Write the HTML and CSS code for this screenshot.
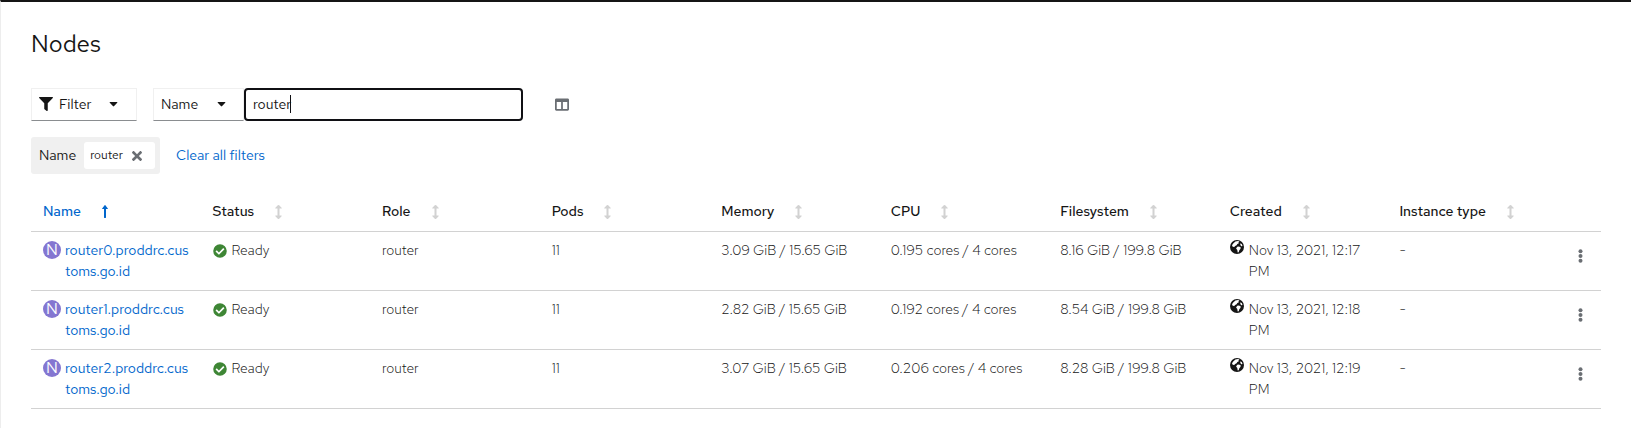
FILE: index.html
```html
<!DOCTYPE html>
<html lang="en">
<head>
<meta charset="utf-8">
<title>Nodes</title>
<link rel="stylesheet" href="styles.css">
</head>
<body>
<svg class="sprite" aria-hidden="true">
  <symbol id="i-filter" viewBox="0 0 512 512"><path d="M488 0H24C3 0-8 26 7 41l185 185v206c0 8 4 15 10 20l80 56c16 11 38 0 38-20V226L505 41c15-15 4-41-17-41z"/></symbol>
  <symbol id="i-caret" viewBox="0 0 320 192"><path d="M31 0h258c17 0 26 21 14 33L174 162c-8 8-20 8-28 0L17 33C5 21 14 0 31 0z"/></symbol>
  <symbol id="i-times" viewBox="0 0 352 352"><path d="M242 176 342 76c13-12 13-32 0-44l-22-22c-12-13-32-13-44 0L176 110 76 10C64-3 44-3 32 10L10 32c-13 12-13 32 0 44l100 100L10 276c-13 12-13 32 0 44l22 22c12 13 32 13 44 0l100-100 100 100c12 13 32 13 44 0l22-22c13-12 13-32 0-44z"/></symbol>
  <symbol id="i-columns" viewBox="0 0 512 448"><path d="M464 0H48C22 0 0 22 0 48v352c0 26 22 48 48 48h416c26 0 48-22 48-48V48c0-26-22-48-48-48zM224 384H64V128h160zm224 0H288V128h160z"/></symbol>
  <symbol id="i-up" viewBox="0 0 6 13"><path d="M2 4v8.600q0 .4.4.4h1.200q.4 0 .4-.4V4h1.500q.8 0 .3-.6L3.400.3Q3-.1 2.600.3L.2 3.400Q-.3 4 .5 4z"/></symbol>
  <symbol id="i-sort" viewBox="0 0 7 14"><path d="M4.500 10.500v-7h1.700q1 0 .4-.8L4.200.3q-.7-.6-1.400 0L.4 2.700q-.6.8.4.8h1.700v7H.8q-1 0-.4.800l2.400 2.400q.7.6 1.400 0l2.400-2.400q.6-.8-.4-.8z"/></symbol>
  <symbol id="i-check" viewBox="0 0 512 512"><path d="M504 256a248 248 0 1 1-496 0 248 248 0 0 1 496 0zM227 387l184-184c6-6 6-16 0-22l-22-23c-7-6-17-6-23 0L216 308l-70-70c-6-6-16-6-23 0l-22 23c-6 6-6 16 0 22l104 104c6 7 16 7 22 0z"/></symbol>
  <symbol id="i-globe" viewBox="0 0 14 14"><circle cx="7" cy="7" r="7"/><path fill="#fff" d="M5.400 1.600 8 .9l1.400.5-1 1 .5.800-1.600.9-.7 1.200-1.500.6-.8 1.100-1.600-.2L2 5.300l1.200-1.900zM7.200 6.800l1.800-.3 1.800 1-.4 1.500-1.100 1.300-.6 1.900-1 .3-.4-2.600-1.200-1.400zM10.400 3.200l1.500 1 .6 1.700-1.200.3-1-1.200z"/></symbol>
  <symbol id="i-kebab" viewBox="0 0 5 14"><circle cx="2.500" cy="2.300" r="2"/><circle cx="2.500" cy="7" r="2"/><circle cx="2.500" cy="11.700" r="2"/></symbol>
</svg>
<main class="page">
  <h1 class="title">Nodes</h1>

  <div class="toolbar">
    <button class="toggle toggle-filter" type="button"><svg class="ic-filter"><use href="#i-filter"/></svg><span>Filter</span><svg class="ic-caret"><use href="#i-caret"/></svg></button>
    <div class="search">
      <button class="toggle toggle-name" type="button"><span>Name</span><svg class="ic-caret"><use href="#i-caret"/></svg></button>
      <div class="field"><input class="input" type="text" value="router" aria-label="Name filter"><span class="cursor"></span></div>
    </div>
    <button class="icon-button" type="button" aria-label="Manage columns"><svg class="ic-columns"><use href="#i-columns"/></svg></button>
  </div>

  <div class="chips">
    <div class="chip-group"><span>Name</span><span class="chip">router<button class="icon-button" type="button" aria-label="Remove router"><svg class="ic-times"><use href="#i-times"/></svg></button></span></div>
    <button class="link-button" type="button">Clear all filters</button>
  </div>

  <table class="nodes">
    <thead>
      <tr>
        <th class="sorted"><button type="button">Name<svg class="ic-up"><use href="#i-up"/></svg></button></th>
        <th><button type="button">Status<svg class="ic-sort"><use href="#i-sort"/></svg></button></th>
        <th><button type="button">Role<svg class="ic-sort"><use href="#i-sort"/></svg></button></th>
        <th><button type="button">Pods<svg class="ic-sort"><use href="#i-sort"/></svg></button></th>
        <th><button type="button">Memory<svg class="ic-sort"><use href="#i-sort"/></svg></button></th>
        <th><button type="button">CPU<svg class="ic-sort"><use href="#i-sort"/></svg></button></th>
        <th><button type="button">Filesystem<svg class="ic-sort"><use href="#i-sort"/></svg></button></th>
        <th><button type="button">Created<svg class="ic-sort"><use href="#i-sort"/></svg></button></th>
        <th><button type="button">Instance type<svg class="ic-sort"><use href="#i-sort"/></svg></button></th>
        <td class="actions"></td>
      </tr>
    </thead>
    <tbody>
      <tr>
        <td><div class="node"><span class="badge">N</span><a href="#">router0.proddrc.cus<wbr>toms.go.id</a></div></td>
        <td><div class="status"><svg class="ic-check"><use href="#i-check"/></svg>Ready</div></td>
        <td>router</td><td>11</td><td>3.09 GiB / 15.65 GiB</td><td>0.195 cores / 4 cores</td><td>8.16 GiB / 199.8 GiB</td>
        <td><div class="created"><svg class="ic-globe"><use href="#i-globe"/></svg><span>Nov 13, 2021, 12:17 PM</span></div></td>
        <td class="dash">-</td>
        <td class="actions"><button class="icon-button" type="button" aria-label="Actions"><svg class="ic-kebab"><use href="#i-kebab"/></svg></button></td>
      </tr>
      <tr>
        <td><div class="node"><span class="badge">N</span><a href="#">router1.proddrc.cus<wbr>toms.go.id</a></div></td>
        <td><div class="status"><svg class="ic-check"><use href="#i-check"/></svg>Ready</div></td>
        <td>router</td><td>11</td><td>2.82 GiB / 15.65 GiB</td><td>0.192 cores / 4 cores</td><td>8.54 GiB / 199.8 GiB</td>
        <td><div class="created"><svg class="ic-globe"><use href="#i-globe"/></svg><span>Nov 13, 2021, 12:18 PM</span></div></td>
        <td class="dash">-</td>
        <td class="actions"><button class="icon-button" type="button" aria-label="Actions"><svg class="ic-kebab"><use href="#i-kebab"/></svg></button></td>
      </tr>
      <tr>
        <td><div class="node"><span class="badge">N</span><a href="#">router2.proddrc.cus<wbr>toms.go.id</a></div></td>
        <td><div class="status"><svg class="ic-check"><use href="#i-check"/></svg>Ready</div></td>
        <td>router</td><td>11</td><td>3.07 GiB / 15.65 GiB</td><td>0.206 cores / 4 cores</td><td>8.28 GiB / 199.8 GiB</td>
        <td><div class="created"><svg class="ic-globe"><use href="#i-globe"/></svg><span>Nov 13, 2021, 12:19 PM</span></div></td>
        <td class="dash">-</td>
        <td class="actions"><button class="icon-button" type="button" aria-label="Actions"><svg class="ic-kebab"><use href="#i-kebab"/></svg></button></td>
      </tr>
    </tbody>
  </table>
</main>
</body>
</html>
```

FILE: styles.css
```css
* { box-sizing: border-box; }
body {
  margin: 0;
  background: #fff;
  color: #151515;
  font: 400 14px/21px "Red Hat Text", Lato, sans-serif;
}
button, input { font: inherit; color: inherit; }
button { margin: 0; padding: 0; border: 0; background: none; cursor: pointer; }
svg { display: block; flex: none; fill: currentColor; }
.sprite { position: absolute; width: 0; height: 0; }

.page {
  min-height: 100vh;
  padding: 26px 30px 16px;
  border-top: 2px solid #151515;
  border-left: 1px solid #ededed;
}
.title {
  margin: 0 0 28px;
  font-size: 24px;
  line-height: 32px;
  font-weight: 400;
}

.toolbar { display: flex; align-items: center; gap: 16px; margin-bottom: 16px; }
.toggle {
  display: flex;
  align-items: center;
  height: 33px;
  padding: 0 8px 1px;
  border: 1px solid #f0f0f0;
  border-bottom-color: #8a8d90;
}
.toggle .ic-caret { margin-left: auto; }
.toggle-filter { width: 106px; gap: 6px; padding-left: 7px; padding-right: 18px; }
.toggle-name { width: 91px; padding-left: 7px; padding-right: 17px; }
.search { display: flex; }
.field { position: relative; width: 279px; }
.input {
  display: block;
  width: 100%;
  height: 33px;
  padding: 0 7px 1px;
  border: 2px solid #101014;
  border-radius: 4px;
  outline: none;
  background: #fff;
}
.cursor { position: absolute; left: 46px; top: 7px; width: 1px; height: 18px; background: #101014; }
.icon-button { color: #6a6e73; }
.toolbar .icon-button { margin-left: 16px; }

.chips { display: flex; align-items: center; gap: 16px; margin-bottom: 17px; }
.chip-group {
  display: flex;
  align-items: center;
  gap: 8px;
  padding: 5px 5px 5px 8px;
  background: #f0f0f0;
  border-radius: 3px;
}
.chip {
  display: flex;
  align-items: center;
  gap: 9px;
  height: 27px;
  padding: 0 13px 0 6px;
  background: #fff;
  border-radius: 3px;
  font-size: 12px;
}
.link-button { color: #06c; }

.ic-filter { width: 14px; height: 14px; }
.ic-caret { width: 9px; height: 5px; }
.ic-times { width: 10px; height: 10px; }
.ic-columns { width: 14px; height: 13px; }
.ic-up { width: 6px; height: 13px; }
.ic-sort { width: 7px; height: 14px; color: #d2d2d2; }
.ic-check { width: 14px; height: 14px; color: #3e8635; }
.ic-globe { width: 14px; height: 14px; }
.ic-kebab { width: 5px; height: 14px; }

.nodes { width: 100%; table-layout: fixed; border-collapse: separate; border-spacing: 0; }
.nodes th, .nodes td {
  padding: 8px 12px;
  border-bottom: 1px solid #d2d2d2;
  text-align: left;
  vertical-align: top;
  font-weight: 300;
}
.nodes th { padding: 10px 12px 9px; }
.nodes th button { display: flex; align-items: center; gap: 21px; font-weight: 500; white-space: nowrap; }
.nodes .sorted { color: #06c; }
.nodes .actions { width: 44px; padding: 17px 0 0 2px; }
.actions .icon-button { display: flex; margin: 0 auto; }
.node, .status, .created { display: flex; }
.node { gap: 4px; }
.node a { min-width: 0; color: #06c; font-weight: 400; text-decoration: none; }
.badge {
  flex: none;
  width: 18px;
  height: 18px;
  margin-top: 1px;
  border-radius: 9px;
  background: #8476d1;
  color: #fff;
  font-size: 16px;
  font-weight: 400;
  line-height: 18px;
  text-align: center;
}
.status { align-items: center; gap: 5px; }
.created { gap: 5px; }
```
